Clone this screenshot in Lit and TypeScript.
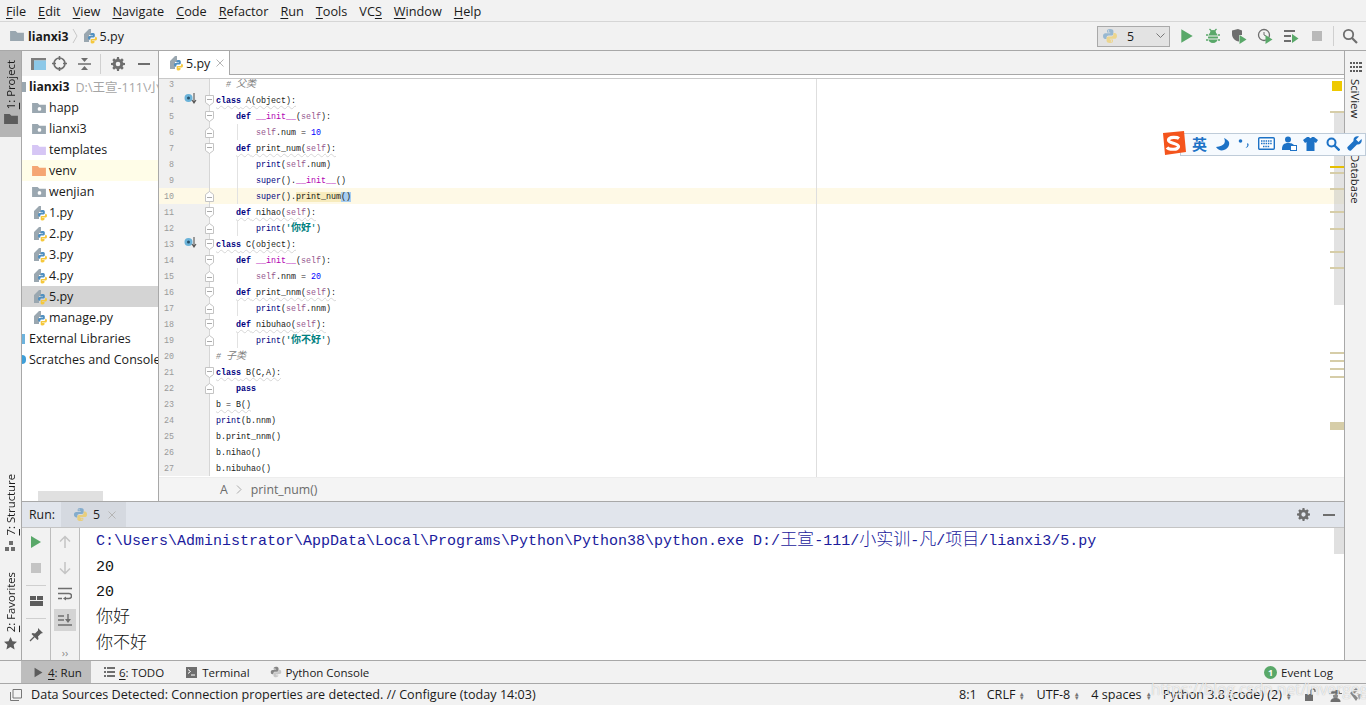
import { LitElement, html, css, svg } from "lit";
import { customElement } from "lit/decorators.js";

const pyLogo = (size: number) => html`<svg width=${size} height=${size} viewBox="0 0 16 16"><path fill="#4f8fc0" d="M8 1C5.4 1 5 2 5 3v1.6h3.2v.6H3.4C2 5.2 1 6.3 1 8.1s1 3 2.3 3h1.3V9.5c0-1.1.9-2 2-2h3c1 0 1.8-.8 1.8-1.8V3c0-1.2-1.3-2-3.4-2zM6.5 2.3a.7.7 0 1 1 0 1.4.7.7 0 0 1 0-1.4z"/><path fill="#f5c83c" d="M8 15c2.6 0 3-1 3-2v-1.6H7.8v-.6h4.8c1.4 0 2.4-1.1 2.4-2.9s-1-3-2.3-3h-1.3v1.6c0 1.1-.9 2-2 2h-3c-1 0-1.8.8-1.8 1.8V13c0 1.2 1.3 2 3.4 2zm1.5-1.3a.7.7 0 1 1 0-1.4.7.7 0 0 1 0 1.4z"/></svg>`;

const fileIcon = () => html`<svg class="ic" width="16" height="16" viewBox="0 0 16 16"><path fill="#9aa7b0" d="M1 6l5-5h2v6H6v7H1z"/><path fill="#4f8fc0" d="M9.5 5C8 5 7.5 5.6 7.5 6.4v1H10v.5H6.6C5.6 7.9 5 8.7 5 9.8s.6 1.9 1.5 1.9h.8v-1c0-.8.6-1.3 1.3-1.3h2c.7 0 1.2-.5 1.2-1.2V6.4C11.8 5.6 11 5 9.5 5z"/><path fill="#f5c83c" d="M9.5 15.5c1.5 0 2-.6 2-1.4v-1H9v-.5h3.4c1 0 1.6-.8 1.6-1.9s-.6-1.9-1.5-1.9h-.3v1c0 .8-.6 1.3-1.3 1.3h-2c-.7 0-1.2.5-1.2 1.2v2.2c0 .8.8 1 2.3 1z"/></svg>`;

const folder = (color: string, dot = true) => html`<svg class="ic" width="14" height="12" viewBox="0 0 15 13"><path fill=${color} d="M0 1h6l2 2h7v9H0z"/>${dot ? svg`<circle cx="8" cy="7.5" r="2" fill="#fff"/>` : ""}</svg>`;

const gear = (size = 14, c = "#6e6e6e") => html`<svg width=${size} height=${size} viewBox="0 0 14 14"><path fill=${c} fill-rule="evenodd" d="M6 0h2l.3 1.9 1.2.5L11 1.3 12.7 3l-1.1 1.5.5 1.2L14 6v2l-1.9.3-.5 1.2 1.1 1.5-1.700 1.700-1.500-1.100-1.200.5L8 14H6l-.3-1.900-1.200-.5L3 12.700 1.300 11l1.100-1.500-.5-1.200L0 8V6l1.900-.3.5-1.200L1.300 3 3 1.300l1.500 1.100 1.200-.5zM7 4.700a2.300 2.300 0 1 0 0 4.600 2.300 2.300 0 0 0 0-4.600z"/></svg>`;

type Tok = [string, string];
interface Line { n: number; toks: Tok[]; fold?: "open" | "close"; guide?: boolean; bm?: boolean; caret?: boolean; }

const kw = (s: string): Tok => ["kw", s];
const p = (s: string): Tok => ["", s];
const se = (): Tok => ["self", "self"];
const wav = (s: string): Tok => ["wav", s];

const LINES: Line[] = [
  { n: 3, toks: [p("  "), ["cm", "# "], ["cmz", "父类"]] },
  { n: 4, fold: "open", bm: true, toks: [["wkw", "class"], wav(" A(object):")] },
  { n: 5, fold: "open", toks: [p("    "), kw("def"), p(" "), ["mg", "__init__"], p("("), se(), p("):")] },
  { n: 6, fold: "close", guide: true, toks: [p("        "), se(), p(".num = "), ["num", "10"]] },
  { n: 7, fold: "open", toks: [p("    "), ["wkw", "def"], wav(" print_num("), ["wself", "self"], wav("):")] },
  { n: 8, guide: true, toks: [p("        "), ["bi", "print"], p("("), se(), p(".num)")] },
  { n: 9, guide: true, toks: [p("        "), ["bi", "super"], p("()."), ["mg", "__init__"], p("()")] },
  { n: 10, fold: "close", guide: true, caret: true, toks: [p("        "), ["bi", "super"], p("()."), ["hlw", "print_num"], ["hlp", "()"]] },
  { n: 11, fold: "open", toks: [p("    "), ["wkw", "def"], wav(" nihao("), ["wself", "self"], wav("):")] },
  { n: 12, fold: "close", guide: true, toks: [p("        "), ["bi", "print"], p("("), ["str", "'"], ["strz", "你好"], ["str", "'"], p(")")] },
  { n: 13, fold: "open", bm: true, toks: [["wkw", "class"], wav(" C(object):")] },
  { n: 14, fold: "open", toks: [p("    "), kw("def"), p(" "), ["mg", "__init__"], p("("), se(), p("):")] },
  { n: 15, fold: "close", guide: true, toks: [p("        "), se(), p(".nnm = "), ["num", "20"]] },
  { n: 16, fold: "open", toks: [p("    "), ["wkw", "def"], wav(" print_nnm("), ["wself", "self"], wav("):")] },
  { n: 17, fold: "close", guide: true, toks: [p("        "), ["bi", "print"], p("("), se(), p(".nnm)")] },
  { n: 18, fold: "open", toks: [p("    "), ["wkw", "def"], wav(" nibuhao("), ["wself", "self"], wav("):")] },
  { n: 19, fold: "close", guide: true, toks: [p("        "), ["bi", "print"], p("("), ["str", "'"], ["strz", "你不好"], ["str", "'"], p(")")] },
  { n: 20, toks: [["cm", "# "], ["cmz", "子类"]] },
  { n: 21, fold: "open", toks: [["wkw", "class"], wav(" B(C,A):")] },
  { n: 22, fold: "close", toks: [p("    "), kw("pass")] },
  { n: 23, toks: [wav("b = B()")] },
  { n: 24, toks: [["bi", "print"], p("(b.nnm)")] },
  { n: 25, toks: [p("b.print_nnm()")] },
  { n: 26, toks: [p("b.nihao()")] },
  { n: 27, toks: [p("b.nibuhao()")] },
];

const MENU: [string, string][] = [["F", "ile"], ["E", "dit"], ["V", "iew"], ["N", "avigate"], ["C", "ode"], ["R", "efactor"], ["R", "un"], ["T", "ools"], ["VC", "S"], ["W", "indow"], ["H", "elp"]];

const MARKS: { top: number; h?: number; y?: boolean }[] = [
  { top: 111 }, { top: 166, y: true }, { top: 172 }, { top: 188 }, { top: 211 }, { top: 228 }, { top: 251 }, { top: 267 },
  { top: 352 }, { top: 360 }, { top: 368 }, { top: 376 }, { top: 422, h: 8 },
];

@customElement("app-root")
export class AppRoot extends LitElement {
  static styles = css`
    :host { display: block; width: 1366px; height: 705px; overflow: hidden; position: relative; background: #f2f2f2; font-family: "Open Sans", "Noto Sans CJK SC", sans-serif; font-size: 12.3px; color: #1a1a1a; }
    svg { display: block; flex: none; }
    u { text-decoration: underline; text-underline-offset: 2px; }
    .app { display: flex; flex-direction: column; height: 705px; }

    .menu { height: 21px; flex: none; display: flex; align-items: center; padding-left: 6px; gap: 12px; border-bottom: 1px solid #d6d6d6; font-size: 12.7px; }
    .nav { height: 28px; flex: none; display: flex; align-items: center; border-bottom: 1px solid #a8a8a8; box-sizing: content-box; }
    .crumb-folder { margin-left: 10px; }
    .crumb-root { margin-left: 4px; font-weight: 700; font-size: 12.2px; }
    .crumb-sep { margin: 0 5px 0 3px; }
    .crumb-file { margin-left: 1px; font-size: 12.5px; }
    .nav-right { margin-left: auto; display: flex; align-items: center; }
    .combo { width: 67px; height: 19px; background: #e3e3e3; border: 1px solid #a9a9a9; display: flex; align-items: center; padding-left: 4px; gap: 9px; box-sizing: content-box; }
    .combo .chev { margin-left: auto; margin-right: 4px; }
    .tools { display: flex; align-items: center; margin-left: 9px; gap: 10px; padding-right: 8px; }
    .vsep { width: 1px; height: 20px; background: #d0d0d0; margin: 0 -2px; }

    .main { flex: 1; display: flex; min-height: 0; }
    .strip { width: 21px; flex: none; display: flex; flex-direction: column; border-right: 1px solid #a8a8a8; }
    .strip.right { width: 21px; border-right: 0; border-left: 1px solid #a8a8a8; align-items: center; }
    .sbtn { display: flex; flex-direction: column; align-items: center; font-size: 11.3px; }
    .sbtn.active { background: #b5b5b5; height: 86px; padding-top: 9px; box-sizing: border-box; gap: 4px; }
    .vl { writing-mode: vertical-rl; transform: rotate(180deg); white-space: nowrap; line-height: 21px; }
    .vr { writing-mode: vertical-rl; white-space: nowrap; line-height: 21px; font-size: 11.3px; }
    .spacer { flex: 1; }
    .sc { margin-top: 11px; display: flex; flex-direction: column; align-items: center; gap: 7px; }
    .db { margin-top: 36px; }
    .struct { gap: 5px; margin-bottom: 20px; }
    .fav { gap: 5px; margin-bottom: 10px; }

    .work { flex: 1; min-width: 0; display: flex; flex-direction: column; }
    .top { height: 450px; flex: none; display: flex; border-bottom: 1px solid #a8a8a8; }

    .project { width: 136px; flex: none; border-right: 1px solid #a8a8a8; background: #fff; display: flex; flex-direction: column; position: relative; overflow: hidden; }
    .phead { height: 25px; flex: none; background: #f2f2f2; display: flex; align-items: center; padding-left: 9px; }
    .phead .g1 { margin-left: 6px; }
    .phead .g2 { margin-left: 11px; }
    .phead .sep { width: 1px; height: 20px; background: #d0d0d0; margin: 0 10px 0 9px; }
    .phead .g3 { margin-left: 13px; }
    .tree { display: flex; flex-direction: column; }
    .row { height: 21px; display: flex; align-items: center; white-space: nowrap; padding-left: 10px; font-size: 12.5px; gap: 3px; }
    .row.py { padding-left: 11px; gap: 0; }
    .row.top-level { padding-left: 7px; }
    .row.venv { background: #fffde8; }
    .row.sel { background: #d4d4d4; }
    .row .dim { color: #a5a5a5; margin-left: 3px; }
    .row b { font-weight: 700; font-size: 12.2px; }
    .rootmark { position: absolute; left: 0; width: 4px; height: 10px; background: #9aa7b0; }
    .libmark { position: absolute; left: 0; width: 3px; height: 10px; background: #6db3dd; }
    .scrmark { position: absolute; left: 0; width: 4px; height: 9px; border-radius: 0 5px 5px 0; background: #3f9fd8; }
    .hthumb { position: absolute; left: 16px; bottom: 0; width: 65px; height: 10px; background: #e0e0e0; }

    .edpane { flex: 1; min-width: 0; display: flex; flex-direction: column; position: relative; background: #fff; }
    .tabs { height: 24px; flex: none; background: #f2f2f2; display: flex; border-bottom: 1px solid #a8a8a8; box-sizing: border-box; }
    .tab { width: 71px; background: #fff; display: flex; align-items: center; padding-left: 10px; gap: 1px; border-right: 1px solid #a8a8a8; margin-bottom: -1px; box-sizing: border-box; font-size: 12.5px; }
    .tab .x { margin-left: 5px; }
    .tabgap { height: 3px; flex: none; background: #fff; border-bottom: 1px solid #c9c9c9; }
    .editor { height: 398px; flex: none; overflow: hidden; position: relative; }
    .lines { margin-top: -3px; display: flex; flex-direction: column; }
    .ln { height: 16px; display: flex; line-height: 16px; font-family: "Liberation Mono", "Noto Sans CJK SC", monospace; font-size: 8.33px; color: #1a1a1a; white-space: pre; }
    .ln.caret { background: #fef9e6; }
    .ln.caret .gut { background: #fef9e6; }
    .gut { width: 51px; flex: none; background: #f0f0f0; border-right: 1px solid #d6d6d6; box-sizing: border-box; position: relative; color: #9a9a9a; }
    .gut .no { position: absolute; right: 35px; top: 1px; }
    .gut .bm { position: absolute; left: 25px; top: 1px; }
    .gut .fold { position: absolute; left: 46px; top: 3px; z-index: 1; }
    .code { padding: 1px 0 0 6px; position: relative; height: 15px; }
    .code.guide::before { content: ""; position: absolute; left: 27px; top: 0; bottom: 0; width: 1px; background: #e2e2e2; }
    .kw, .wkw { color: #000080; font-weight: 700; }
    .mg { color: #b200b2; }
    .self, .wself { color: #94558d; }
    .num { color: #0000ff; }
    .bi { color: #000080; }
    .cm { color: #808080; font-style: italic; }
    .cmz { color: #808080; font-style: italic; font-size: 10px; line-height: 0; }
    .str { color: #008080; font-weight: 700; }
    .strz { color: #008080; font-weight: 700; font-size: 10px; line-height: 0; }
    .wav, .wkw, .wself { text-decoration: underline wavy #d6d6d6 1px; text-underline-offset: 2px; }
    .hlw { background: #f7ebbd; }
    .hlp { background: #a8cdf0; }
    .margin { position: absolute; left: 657px; top: 0; bottom: 0; width: 1px; background: #dedede; }
    .ethumb { position: absolute; right: 0; top: 33px; width: 10px; height: 193px; background: rgba(190,190,190,.45); }
    .mark { position: absolute; right: 0; width: 14px; height: 2px; background: #d6cda8; }
    .mark.y { background: #e6bf00; }
    .square { position: absolute; right: 2px; top: 2px; width: 10px; height: 10px; background: #eec900; }
    .bcrumb { flex: 1; background: #f4f4f4; display: flex; align-items: center; padding-left: 61px; color: #6b6b6b; border-top: 1px solid #ededed; font-size: 12.3px; gap: 8px; }
    .bcrumb .last { margin-left: 1px; }

    .run { flex: 1; min-height: 0; display: flex; flex-direction: column; background: #fff; }
    .rhead { height: 25px; flex: none; background: #e1e5ec; display: flex; align-items: center; padding-left: 7px; border-bottom: 1px solid #c4c4c4; box-sizing: content-box; }
    .rtab { width: 65px; height: 25px; margin-left: 6px; background: #d5d9e0; display: flex; align-items: center; padding-left: 12px; box-sizing: border-box; gap: 5px; }
    .rtab .logo { opacity: .6; }
    .rtab .x { margin-left: 3px; }
    .rhead .end { margin-left: auto; display: flex; align-items: center; gap: 13px; padding-right: 9px; }
    .rbody { flex: 1; min-height: 0; display: flex; }
    .rc1, .rc2 { width: 29px; flex: none; background: #f2f2f2; border-right: 1px solid #bdbdbd; box-sizing: border-box; display: flex; flex-direction: column; align-items: center; padding-top: 3px; }
    .hr { width: 20px; height: 1px; background: #cfcfcf; margin: 2px 0 4px; flex: none; }
    .rb { height: 22px; width: 22px; display: flex; align-items: center; justify-content: center; margin-bottom: 4px; flex: none; }
    .rb.on { background: #d4d4d4; }
    .more { color: #888; font-size: 11px; margin-top: 10px; }
    .console { flex: 1; position: relative; font-family: "Liberation Mono", "Noto Sans CJK SC", monospace; font-size: 15px; padding: 1px 0 0 16px; overflow: hidden; }
    .console div { height: 25.7px; line-height: 25.7px; white-space: pre; color: #111; }
    .console .cmd { color: #1b1b9c; }
    .zh { font-size: 17px; line-height: 0; font-family: "Noto Sans CJK SC", sans-serif; font-weight: 300; }
    .cthumb { position: absolute; right: 0; top: 0; width: 10px; height: 87px; background: #e0e0e0; }

    .btools { height: 22px; flex: none; display: flex; align-items: center; border-top: 1px solid #a8a8a8; font-size: 11.5px; }
    .bt { height: 100%; display: flex; align-items: center; gap: 4px; }
    .bt.on { background: #bdbdbd; width: 70px; padding-left: 12px; box-sizing: border-box; margin-left: 21px; }
    .bt.todo { margin-left: 13px; }
    .bt.term { margin-left: 22px; gap: 5px; }
    .bt.pyc { margin-left: 20px; }
    .bt.pyc .logo { filter: grayscale(1); }
    .bt.ev { margin-left: auto; margin-right: 33px; }
    .dot { width: 13px; height: 13px; border-radius: 50%; background: #59a869; color: #fff; font-size: 9px; font-weight: 700; display: flex; align-items: center; justify-content: center; }

    .status { height: 21px; flex: none; display: flex; align-items: center; border-top: 1px solid #a8a8a8; padding-left: 10px; font-size: 12.6px; white-space: nowrap; box-sizing: content-box; }
    .status .msg { margin-left: 9px; }
    .sright { margin-left: auto; display: flex; align-items: center; gap: 12px; padding-right: 4px; }
    .sright .pos { margin-right: -2px; }
    .sright .lock, .sright .hector { margin-left: 1px; }
    .sright .last { margin-left: -4px; }
    .updown { display: inline-block; margin-left: 5px; color: #777; font-size: 7px; line-height: 4px; vertical-align: middle; }
    .updown span { display: block; }

    .ime { position: absolute; left: 1160px; top: 130px; width: 206px; height: 27px; display: flex; align-items: center; }
    .ime-bar { position: absolute; left: 20px; top: 3px; right: 0; height: 23px; background: #f6fafe; border: 1px solid #bfccd9; box-sizing: border-box; }
    .ime-logo { position: relative; z-index: 1; }
    .ime-items { position: relative; z-index: 1; display: flex; align-items: center; margin-left: 5px; color: #1d72c6; }
    .ime-ch { font-family: "Noto Sans CJK SC", sans-serif; font-weight: 700; font-size: 15px; line-height: 20px; width: 15px; }
    .m9 { margin-left: 9px; } .m8 { margin-left: 8px; } .m7 { margin-left: 7px; } .m6 { margin-left: 6px; }
    .watermark { position: absolute; left: 1151px; top: 678px; font-size: 15.5px; color: rgba(255,255,255,.75); text-shadow: 0 0 1px rgba(120,120,120,.55); white-space: nowrap; }
    .dimlogo { opacity: .5; }
  `;

  private fold(kind: "open" | "close") {
    const d = kind === "open" ? "M.5.5h8v7l-4 3-4-3z" : "M.5 10.5h8v-7l-4-3-4 3z";
    const y = kind === "open" ? 4 : 6;
    return html`<svg class="fold" width="9" height="11" viewBox="0 0 9 11"><path d=${d} fill="#fff" stroke="#c4c4c4"/><path d="M2 ${y}.5h5" stroke="#aaa"/></svg>`;
  }

  private renderLine(l: Line) {
    return html`<div class="ln ${l.caret ? "caret" : ""}">
      <div class="gut"><span class="no">${l.n}</span>
        ${l.bm ? html`<svg class="bm" width="13" height="13" viewBox="0 0 13 13"><circle cx="4.5" cy="5" r="4" fill="#6bb3d9"/><circle cx="4.5" cy="5" r="1.5" fill="#27506a"/><path d="M10 0v9M8 7l2 3 2-3" fill="none" stroke="#555" stroke-width="1.1"/></svg>` : ""}
        ${l.fold ? this.fold(l.fold) : ""}
      </div>
      <div class="code ${l.guide ? "guide" : ""}">${l.toks.map(([c, t]) => c ? html`<span class=${c}>${t}</span>` : t)}</div>
    </div>`;
  }

  private ud() { return html`<span class="updown"><span>▴</span><span>▾</span></span>`; }

  render() {
    const tree = [
      ["happ", "#9aa7b0", true], ["lianxi3", "#9aa7b0", true], ["templates", "#d6c6f5", false], ["venv", "#f5a673", false], ["wenjian", "#9aa7b0", true],
    ] as [string, string, boolean][];
    const play = (c = "#59a869", s = 14) => html`<svg width=${s} height=${s} viewBox="0 0 14 14"><path d="M2 1l10 6-10 6z" fill=${c}/></svg>`;
    return html`<div class="app">
      <div class="menu">${MENU.map(([a, b]) => html`<span>${a === "VC" ? html`VC<u>S</u>` : html`<u>${a}</u>${b}`}</span>`)}</div>
      <div class="nav">
        <span class="crumb-folder">${folder("#9aa7b0", false)}</span>
        <span class="crumb-root">lianxi3</span>
        <svg class="crumb-sep" width="6" height="16" viewBox="0 0 6 16"><path d="M1 1l4 7-4 7" fill="none" stroke="#c8c8c8"/></svg>
        ${fileIcon()}<span class="crumb-file">5.py</span>
        <div class="nav-right">
          <div class="combo"><span class="dimlogo">${pyLogo(16)}</span><span>5</span>
            <svg class="chev" width="9" height="6" viewBox="0 0 9 6"><path d="M.5.5l4 4 4-4" fill="none" stroke="#777"/></svg></div>
          <div class="tools">
            ${play("#59a869", 16)}
            <svg width="16" height="16" viewBox="0 0 16 16"><ellipse cx="8" cy="9.5" rx="5" ry="5.5" fill="#59a869"/><path d="M5 5a3 3 0 0 1 6 0z" fill="#59a869"/><path d="M4.5 1l2 2M11.5 1l-2 2M1 7h2M13 7h2M1 12h2M13 12h2" stroke="#59a869" stroke-width="1.3"/><path d="M3 8h10M3 11h10" stroke="#f2f2f2"/></svg>
            <svg width="16" height="16" viewBox="0 0 16 16"><path d="M1 2.5L7 1l4 1.5V7H8v6.5C4 13 1 10 1 6z" fill="#6e6e6e"/><path d="M8.5 7l7 4.5-7 4.500z" fill="#59a869"/></svg>
            <svg width="16" height="16" viewBox="0 0 16 16"><circle cx="7" cy="7" r="5.5" fill="none" stroke="#6e6e6e" stroke-width="1.3"/><path d="M7 4v3l2 1" fill="none" stroke="#6e6e6e"/><path d="M8.5 7l7 4.5-7 4.500z" fill="#59a869"/></svg>
            <svg width="16" height="16" viewBox="0 0 16 16"><path d="M1 2h11v2H1zM1 7h7v2H1zM1 12h7v2H1z" fill="#6e6e6e"/><path d="M9 6l6.500 4.500L9 15z" fill="#59a869"/></svg>
            <svg width="16" height="16" viewBox="0 0 16 16"><rect x="3" y="3" width="10" height="10" fill="#b9b9b9"/></svg>
            <span class="vsep"></span>
            <svg width="16" height="16" viewBox="0 0 16 16"><circle cx="6.5" cy="6.5" r="4.7" fill="none" stroke="#6e6e6e" stroke-width="1.8"/><path d="M10 10l5 5" stroke="#6e6e6e" stroke-width="2.2"/></svg>
          </div>
        </div>
      </div>
      <div class="main">
        <div class="strip">
          <div class="sbtn active"><span class="vl"><u>1</u>: Project</span>${folder("#5c5c5c", false)}</div>
          <div class="spacer"></div>
          <div class="sbtn struct"><span class="vl"><u>7</u>: Structure</span><svg width="11" height="11" viewBox="0 0 11 11"><path fill="#6e6e6e" d="M4 0h4v4H4zM0 6h4v4H0zM6 6h4v4H6z"/></svg></div>
          <div class="sbtn fav"><span class="vl"><u>2</u>: Favorites</span><svg width="13" height="13" viewBox="0 0 13 13"><path fill="#5c5c5c" d="M6.5 0l2 4.3 4.5.5-3.4 3 1 4.7-4.1-2.4-4.1 2.4 1-4.7L0 4.8l4.5-.5z"/></svg></div>
        </div>
        <div class="work">
          <div class="top">
            <div class="project">
              <div class="phead">
                <svg width="15" height="12" viewBox="0 0 15 12"><path d="M0 0h15v2.5H3V12H0z" fill="#7e7e7e"/><rect x="3" y="2.5" width="12" height="9.5" fill="#8cc8e8"/></svg>
                <svg class="g1" width="15" height="15" viewBox="0 0 15 15"><circle cx="7.5" cy="7.5" r="5.5" fill="none" stroke="#6e6e6e" stroke-width="1.6"/><path d="M7.5 0v4M7.5 11v4M0 7.5h4M11 7.5h4" stroke="#6e6e6e" stroke-width="1.6"/></svg>
                <svg class="g2" width="13" height="14" viewBox="0 0 13 14"><path d="M0 7h13" stroke="#6e6e6e" stroke-width="1.5"/><path d="M3 1h7L6.5 5zM3 13h7L6.5 9z" fill="#6e6e6e"/></svg>
                <span class="sep"></span>
                ${gear(14)}
                <svg class="g3" width="12" height="2" viewBox="0 0 12 2"><rect width="12" height="2" fill="#6e6e6e"/></svg>
              </div>
              <div class="tree">
                <div class="row top-level"><span class="rootmark"></span><b>lianxi3</b><span class="dim">D:\\王宣-111\\小实训-凡\\项目</span></div>
                ${tree.map(([n, c, d]) => html`<div class="row ${n === "venv" ? "venv" : ""}">${folder(c, d)}<span>${n}</span></div>`)}
                ${["1.py", "2.py", "3.py", "4.py", "5.py", "manage.py"].map(n => html`<div class="row py ${n === "5.py" ? "sel" : ""}">${fileIcon()}<span>${n}</span></div>`)}
                <div class="row top-level"><span class="libmark"></span>External Libraries</div>
                <div class="row top-level"><span class="scrmark"></span>Scratches and Consoles</div>
              </div>
              <div class="hthumb"></div>
            </div>
            <div class="edpane">
              <div class="tabs"><div class="tab">${fileIcon()}<span>5.py</span>
                <svg class="x" width="8" height="8" viewBox="0 0 8 8"><path d="M.5.5l7 7M7.5.5l-7 7" stroke="#b5b5b5"/></svg></div></div>
              <div class="tabgap"></div>
              <div class="editor">
                <div class="lines">${LINES.map(l => this.renderLine(l))}</div>
                <div class="margin"></div>
                <div class="ethumb"></div>
                <div class="square"></div>
                ${MARKS.map(m => html`<div class="mark ${m.y ? "y" : ""}" style="top:${m.top - 79}px;height:${m.h ?? 2}px"></div>`)}
              </div>
              <div class="bcrumb"><span>A</span><svg width="6" height="9" viewBox="0 0 6 9"><path d="M1 .5l4 4-4 4" fill="none" stroke="#aaa"/></svg><span class="last">print_num()</span></div>
            </div>
          </div>
          <div class="run">
            <div class="rhead"><span>Run:</span>
              <div class="rtab"><span class="logo">${pyLogo(15)}</span><span>5</span>
                <svg class="x" width="8" height="8" viewBox="0 0 8 8"><path d="M.5.5l7 7M7.5.5l-7 7" stroke="#b5b5b5"/></svg></div>
              <div class="end">${gear(13)}<svg width="12" height="2" viewBox="0 0 12 2"><rect width="12" height="2" fill="#6e6e6e"/></svg></div>
            </div>
            <div class="rbody">
              <div class="rc1">
                <div class="rb">${play("#59a869", 14)}</div>
                <div class="rb"><svg width="12" height="12"><rect width="10" height="10" x="1" y="1" fill="#c4c4c4"/></svg></div>
                <div class="hr"></div>
                <div class="rb"><svg width="13" height="10" viewBox="0 0 13 10"><path d="M0 0h6v4H0zM7 0h6v4H7zM0 5h13v5H0z" fill="#5c5c5c"/></svg></div>
                <div class="hr"></div>
                <div class="rb"><svg width="15" height="15" viewBox="0 0 15 15"><path d="M9 1l5 5-2 .5-3 3 .5 2.5-1 1L2.500 7l1-1 2.500.5 3-3z" fill="#5c5c5c"/><path d="M5.500 9.500l-4.500 4.500" stroke="#5c5c5c" stroke-width="1.300"/></svg></div>
              </div>
              <div class="rc2">
                <div class="rb"><svg width="12" height="14" viewBox="0 0 12 14"><path d="M6 13V1.5M1 6.5l5-5 5 5" fill="none" stroke="#c4c4c4" stroke-width="1.5"/></svg></div>
                <div class="rb"><svg width="12" height="14" viewBox="0 0 12 14"><path d="M6 1v11.5M1 7.5l5 5 5-5" fill="none" stroke="#c4c4c4" stroke-width="1.5"/></svg></div>
                <div class="rb"><svg width="14" height="14" viewBox="0 0 14 14"><path d="M0 1.5h14M0 6.5h11a2.500 2.500 0 0 1 0 5H7M0 11.500h4" fill="none" stroke="#6e6e6e" stroke-width="1.4"/><path d="M8 9.500v4l-3-2z" fill="#6e6e6e"/></svg></div>
                <div class="rb on"><svg width="14" height="14" viewBox="0 0 14 14"><path d="M0 3h6M0 7h6M0 12h14M10 1v7" fill="none" stroke="#6e6e6e" stroke-width="1.4"/><path d="M7 6h6l-3 4z" fill="#6e6e6e"/></svg></div>
                <div class="more">››</div>
              </div>
              <div class="console">
                <div class="cmd">C:\\Users\\Administrator\\AppData\\Local\\Programs\\Python\\Python38\\python.exe D:/<span class="zh">王宣</span>-111/<span class="zh">小实训</span>-<span class="zh">凡</span>/<span class="zh">项目</span>/lianxi3/5.py</div>
                <div>20</div><div>20</div><div><span class="zh">你好</span></div><div><span class="zh">你不好</span></div>
                <div class="cthumb"></div>
              </div>
            </div>
          </div>
        </div>
        <div class="strip right">
          <div class="sc"><svg width="12" height="10" viewBox="0 0 12 10"><path fill="#5c5c5c" d="M0 0h2v2H0zM3 0h2v2H3zM6 0h2v2H6zM9 0h3v2H9zM0 4h2v2H0zM3 4h2v2H3zM6 4h2v2H6zM9 4h3v2H9zM0 8h2v2H0zM3 8h2v2H3zM6 8h2v2H6zM9 8h3v2H9z"/></svg><span class="vr">SciView</span></div>
          <span class="vr db">Database</span>
        </div>
      </div>
      <div class="btools">
        <div class="bt on">${play("#5c5c5c", 11)}<span><u>4</u>: Run</span></div>
        <div class="bt todo"><svg width="11" height="10" viewBox="0 0 11 10"><path d="M0 0h2v2H0zM3 0h8v2H3zM0 4h2v2H0zM3 4h8v2H3zM0 8h2v2H0zM3 8h8v2H3z" fill="#6e6e6e"/></svg><span><u>6</u>: TODO</span></div>
        <div class="bt term"><svg width="11" height="11" viewBox="0 0 11 11"><rect width="11" height="11" fill="#6e6e6e"/><path d="M2 2.500l2.500 2-2.500 2M5 8h4" fill="none" stroke="#fff"/></svg><span>Terminal</span></div>
        <div class="bt pyc"><span class="logo">${pyLogo(12)}</span><span>Python Console</span></div>
        <div class="bt ev"><span class="dot">1</span><span>Event Log</span></div>
      </div>
      <div class="status">
        <svg width="12" height="12" viewBox="0 0 12 12"><path d="M3 .5h8.500V9H3zM.5 3v8.500H9" fill="none" stroke="#777"/></svg>
        <span class="msg">Data Sources Detected: Connection properties are detected. // Configure (today 14:03)</span>
        <div class="sright">
          <span class="pos">8:1</span><span>CRLF${this.ud()}</span><span>UTF-8${this.ud()}</span><span>4 spaces${this.ud()}</span><span>Python 3.8 (code) (2)${this.ud()}</span>
          <svg class="lock" width="12" height="13" viewBox="0 0 12 13"><path d="M1 6h8v7H1z" fill="#6e6e6e"/><path d="M7 6V3a2 2 0 0 1 4 0v1" fill="none" stroke="#6e6e6e" stroke-width="1.3"/></svg>
          <svg class="hector" width="13" height="14" viewBox="0 0 13 14"><path d="M3 2h7l1 3H2z" fill="#6e6e6e"/><path d="M0 5.500h13" stroke="#6e6e6e"/><circle cx="6.500" cy="8" r="2.500" fill="#8a8a8a"/><path d="M1.500 14c0-3 2-4 5-4s5 1 5 4z" fill="#6e6e6e"/></svg>
          <svg class="last" width="12" height="14" viewBox="0 0 12 14"><path d="M0 5l6-5 2 2-4 4 4 4-2 3z" fill="#888"/><path d="M7 5l5 2-3 5z" fill="#aaa"/></svg>
        </div>
      </div>
    </div>
    <div class="watermark">https://blog.csdn.net/invergeg</div>
    <div class="ime">
      <div class="ime-bar"></div>
      <svg class="ime-logo" width="27" height="27" viewBox="0 0 27 27"><path d="M3 3l21-2 2 21-21 3z" fill="#f4541c"/><path d="M19 8.500c-2-1.500-10-2-10.500 1.500S18 13 18.500 16.500 9 20 7 17.500" fill="none" stroke="#fff" stroke-width="3.2"/></svg>
      <div class="ime-items">
        <span class="ime-ch">英</span>
        <svg class="m9" width="14" height="14" viewBox="0 0 14 14"><path d="M8 1c2 4 1 8-8 9 2 3 5 4 8 3s6-4 5-8c-1-2-3-3-5-4z" fill="#1d72c6"/></svg>
        <svg class="m8" width="12" height="12" viewBox="0 0 12 12"><circle cx="2.500" cy="3" r="1.800" fill="#1d72c6"/><path d="M9 6c1 1 0 3-1.500 4 3-.5 3.500-3 2.800-4.200C10 5 9 5 9 6z" fill="#1d72c6"/></svg>
        <svg class="m8" width="17" height="13" viewBox="0 0 17 13"><rect x=".7" y=".7" width="15.6" height="11.6" rx="1" fill="#fff" stroke="#1d72c6" stroke-width="1.4"/><path d="M3 4h11M3 6.500h11M5 9.500h7" stroke="#1d72c6" stroke-width="1.3" stroke-dasharray="1.5 .8"/></svg>
        <svg class="m7" width="15" height="15" viewBox="0 0 15 15"><circle cx="6" cy="3.500" r="3" fill="#1d72c6"/><path d="M0 13c0-4 2-6 6-6s5 1 6 2H8v5H0z" fill="#1d72c6"/><rect x="8.500" y="9.500" width="6" height="5" fill="#fff" stroke="#1d72c6"/></svg>
        <svg class="m6" width="15" height="14" viewBox="0 0 15 14"><path d="M4 0h2c.5 1.500 2.500 1.500 3 0h2l4 3-2 3-1.500-1v9H3.500V5L2 6 0 3z" fill="#1d72c6"/></svg>
        <svg class="m8" width="14" height="14" viewBox="0 0 14 14"><circle cx="5.500" cy="5.500" r="4" fill="none" stroke="#1d72c6" stroke-width="2"/><path d="M8.500 8.500l5 5" stroke="#1d72c6" stroke-width="2.400"/></svg>
        <svg class="m7" width="15" height="15" viewBox="0 0 15 15"><path d="M14.500 3l-3 3L9 3.500l3-3c-3-1-6 1-5.500 4.500L.5 11c-1 1.500 2 4.500 3.500 3.500l6-6c3.500.5 5.500-2.500 4.500-5.500z" fill="#1d72c6"/></svg>
      </div>
    </div>`;
  }
}
